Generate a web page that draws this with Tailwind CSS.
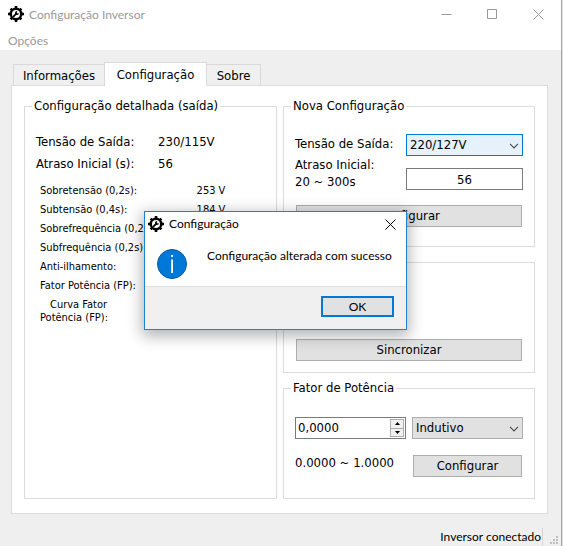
<!DOCTYPE html>
<html lang="pt-BR">
<head>
<meta charset="utf-8">
<title>Configuração Inversor</title>
<script src="https://cdn.jsdelivr.net/npm/@tailwindcss/browser@4"></script>
</head>
<body class="bg-[#e0e0e0] font-['DejaVu_Sans_Condensed','DejaVu_Sans',sans-serif] text-[13px] leading-4 text-black">
<svg class="hidden">
  <symbol id="gear" viewBox="0 0 16 16">
    <circle cx="8" cy="8" r="6.500"/>
    <path d="M8 0v16M0 8h16M2.600 2.600l10.800 10.800M13.400 2.600 2.600 13.400" stroke="#000" stroke-width="2.600"/>
    <circle cx="8" cy="8" r="4" fill="#fff"/>
    <path d="M5.600 10.400 8.600 7.400" stroke="#000" stroke-width="1.800" stroke-linecap="round"/>
    <path d="M9.200 5a2 2 0 1 0 1.800 1.900l-1.400.8-1-1z"/>
  </symbol>
  <symbol id="chevron" viewBox="0 0 10 6"><path d="M1 .8 5 4.800 9 .8" fill="none" stroke="#505050" stroke-width="1.200"/></symbol>
</svg>
<div class="relative mr-px flex min-h-screen flex-col border-r border-[#a6a6a6] bg-[#efefef]">
  <header class="bg-white font-['Lato',sans-serif] text-xs text-[#999]">
    <div class="flex h-7 items-center pl-2">
      <svg class="size-4"><use href="#gear"/></svg>
      <h1 class="ml-[5px] flex-1 pt-px">Configuração Inversor</h1>
      <button type="button" aria-label="Minimizar" class="flex h-7 w-[46px] items-center justify-center"><svg class="size-[11px]" viewBox="0 0 11 11"><path d="M.5 5.500h10" stroke="#999"/></svg></button>
      <button type="button" aria-label="Maximizar" class="flex h-7 w-[46px] items-center justify-center"><svg class="size-[11px]" viewBox="0 0 11 11"><path d="M.5.5h9v9h-9z" fill="none" stroke="#999"/></svg></button>
      <button type="button" aria-label="Fechar" class="flex h-7 w-[46px] items-center justify-center"><svg class="size-[11px]" viewBox="0 0 11 11"><path d="m.5.5 10 10m0-10-10 10" stroke="#999"/></svg></button>
    </div>
    <nav class="flex h-[22px] items-center pt-1 pl-2"><button type="button">Opções</button></nav>
  </header>

  <main class="flex flex-col pt-3 pr-[13px] pl-[11px]">
    <div role="tablist" class="relative flex items-end pl-[2px]">
      <button type="button" role="tab" class="h-[21px] w-[91px] border border-r-0 border-b-0 border-[#d9d9d9] bg-[#f0f0f0] pt-px">Informações</button>
      <button type="button" role="tab" aria-selected="true" class="relative -mb-px h-6 w-[103px] border border-b-0 border-[#d9d9d9] bg-white">Configuração</button>
      <button type="button" role="tab" class="h-[21px] w-[54px] border border-b-0 border-l-0 border-[#d9d9d9] bg-[#f0f0f0] pt-px">Sobre</button>
    </div>
    <div role="tabpanel" class="grid grid-cols-[253fr_252fr] gap-x-[6px] border border-[#dcdcdc] bg-white px-3 pt-3 pb-[14px]">
      <fieldset class="border border-[#dcdcdc] pl-[11px]">
        <legend class="ml-[-4px] px-[2px]">Configuração detalhada (saída)</legend>
        <dl class="grid grid-cols-[122px_1fr] pt-[17px] leading-[22px]">
          <dt>Tensão de Saída:</dt><dd>230/115V</dd>
          <dt>Atraso Inicial (s):</dt><dd>56</dd>
        </dl>
        <dl class="mt-[6px] grid grid-cols-[147px_48px] pl-1 text-[11px] leading-[19px]">
          <dt>Sobretensão (0,2s):</dt><dd class="text-center">253 V</dd>
          <dt>Subtensão (0,4s):</dt><dd class="text-center">184 V</dd>
          <dt>Sobrefrequência (0,2s):</dt><dd></dd>
          <dt>Subfrequência (0,2s):</dt><dd></dd>
          <dt>Anti-ilhamento:</dt><dd></dd>
          <dt>Fator Potência (FP):</dt><dd></dd>
          <dt class="pt-[3px] indent-[10px] leading-[13px]">Curva Fator<br>Potência (FP):</dt><dd></dd>
        </dl>
      </fieldset>

      <div class="flex flex-col">
        <fieldset class="border border-[#dcdcdc] px-[11px] pb-[19px]">
          <legend class="ml-[-4px] px-[2px]">Nova Configuração</legend>
          <div class="grid grid-cols-[1fr_117px] items-end pt-5">
            <label for="tensao" class="pb-1">Tensão de Saída:</label>
            <div class="relative">
              <select id="tensao" class="block h-[22px] w-full appearance-none border border-[#0078d7] bg-[#e5f1fb] px-[3px]"><option>220/127V</option></select>
              <svg class="pointer-events-none absolute top-[9px] right-1 h-[6px] w-[10px]"><use href="#chevron"/></svg>
            </div>
            <label for="atraso" class="leading-[17px]">Atraso Inicial:<br>20 ~ 300s</label>
            <input id="atraso" value="56" class="h-[22px] w-full border border-[#7a7a7a] bg-white text-center">
          </div>
          <div class="px-px pt-[15px]"><button type="button" class="block h-[22px] w-full border border-[#adadad] bg-[#e1e1e1]">Configurar</button></div>
        </fieldset>

        <fieldset class="mt-[15px] border border-[#dcdcdc] px-3 pt-[76px] pb-[11px]">
          <button type="button" class="block h-[22px] w-full border border-[#adadad] bg-[#e1e1e1]">Sincronizar</button>
        </fieldset>

        <fieldset class="mt-[7px] border border-[#dcdcdc] px-[11px] pb-[21px]">
          <legend class="ml-[-4px] px-[2px]">Fator de Potência</legend>
          <div class="grid grid-cols-2 gap-x-[6px] gap-y-4 pt-[21px]">
            <div class="flex h-[22px] border border-[#7a7a7a] bg-white p-px">
              <input id="fator" value="0,0000" inputmode="decimal" class="w-0 flex-1 pl-px">
              <div class="flex w-[14px] flex-col">
                <button type="button" aria-label="Aumentar" class="flex flex-1 items-center justify-center border border-[#adadad] bg-[#f0f0f0]"><svg class="h-[3px] w-[5px]" viewBox="0 0 5 3"><path d="M0 3h5L2.500 0z"/></svg></button>
                <button type="button" aria-label="Diminuir" class="flex flex-1 items-center justify-center border border-t-0 border-[#adadad] bg-[#f0f0f0]"><svg class="h-[3px] w-[5px]" viewBox="0 0 5 3"><path d="M0 0h5L2.500 3z"/></svg></button>
              </div>
            </div>
            <div class="relative">
              <select aria-label="Tipo" class="block h-[22px] w-full appearance-none border border-[#adadad] bg-[#e1e1e1] px-[3px]"><option>Indutivo</option></select>
              <svg class="pointer-events-none absolute top-[9px] right-1 h-[6px] w-[10px]"><use href="#chevron"/></svg>
            </div>
            <label for="fator">0.0000 ~ 1.0000</label>
            <div class="px-px"><button type="button" class="block h-[22px] w-full border border-[#adadad] bg-[#e1e1e1]">Configurar</button></div>
          </div>
        </fieldset>
      </div>
    </div>
  </main>

  <footer class="mt-auto flex h-[18px] items-stretch justify-end pr-[3px] font-['Lato',sans-serif] text-xs">
    <span class="border-r border-[#d7d7d7] pr-px leading-[18px]">Inversor conectado</span>
    <svg class="ml-[7px] h-[18px] w-2" viewBox="0 0 8 18" fill="#bfbfbf"><path d="M6 8h2v2H6zM3 11h2v2H3zM6 11h2v2H6zM0 14h2v2H0zM3 14h2v2H3zM6 14h2v2H6z"/></svg>
  </footer>

  <div role="dialog" aria-labelledby="dlg-title" class="absolute top-[211px] left-36 w-[263px] border border-[#1883d7] bg-white font-['Lato',sans-serif] text-xs shadow-[0_4px_14px_2px_rgba(0,0,0,0.3)]">
    <div class="flex h-6 items-center pl-[3px]">
      <svg class="size-4"><use href="#gear"/></svg>
      <h2 id="dlg-title" class="ml-[5px] flex-1">Configuração</h2>
      <button type="button" aria-label="Fechar" class="flex h-6 w-[31px] items-center justify-center"><svg class="size-[11px]" viewBox="0 0 11 11"><path d="m.5.5 10 10m0-10-10 10" stroke="#000"/></svg></button>
    </div>
    <div class="flex h-[50px] gap-5 pt-[13px] pl-3">
      <svg class="size-[30px] shrink-0" viewBox="0 0 30 30"><circle cx="15" cy="15" r="14.500" fill="#0078d7" stroke="#0b5796"/><path d="M14.200 6h1.800v2h-1.800zM14.200 10.500h1.800v13.500h-1.800z" fill="#fff"/></svg>
      <p class="-mt-px whitespace-nowrap">Configuração alterada com sucesso</p>
    </div>
    <div class="flex justify-end border-t border-[#dfdfdf] bg-[#f0f0f0] pt-[9px] pr-3 pb-3">
      <button type="button" class="h-[21px] w-[73px] border-2 border-[#0078d7] bg-[#e1e1e1]">OK</button>
    </div>
  </div>
</div>
</body>
</html>
